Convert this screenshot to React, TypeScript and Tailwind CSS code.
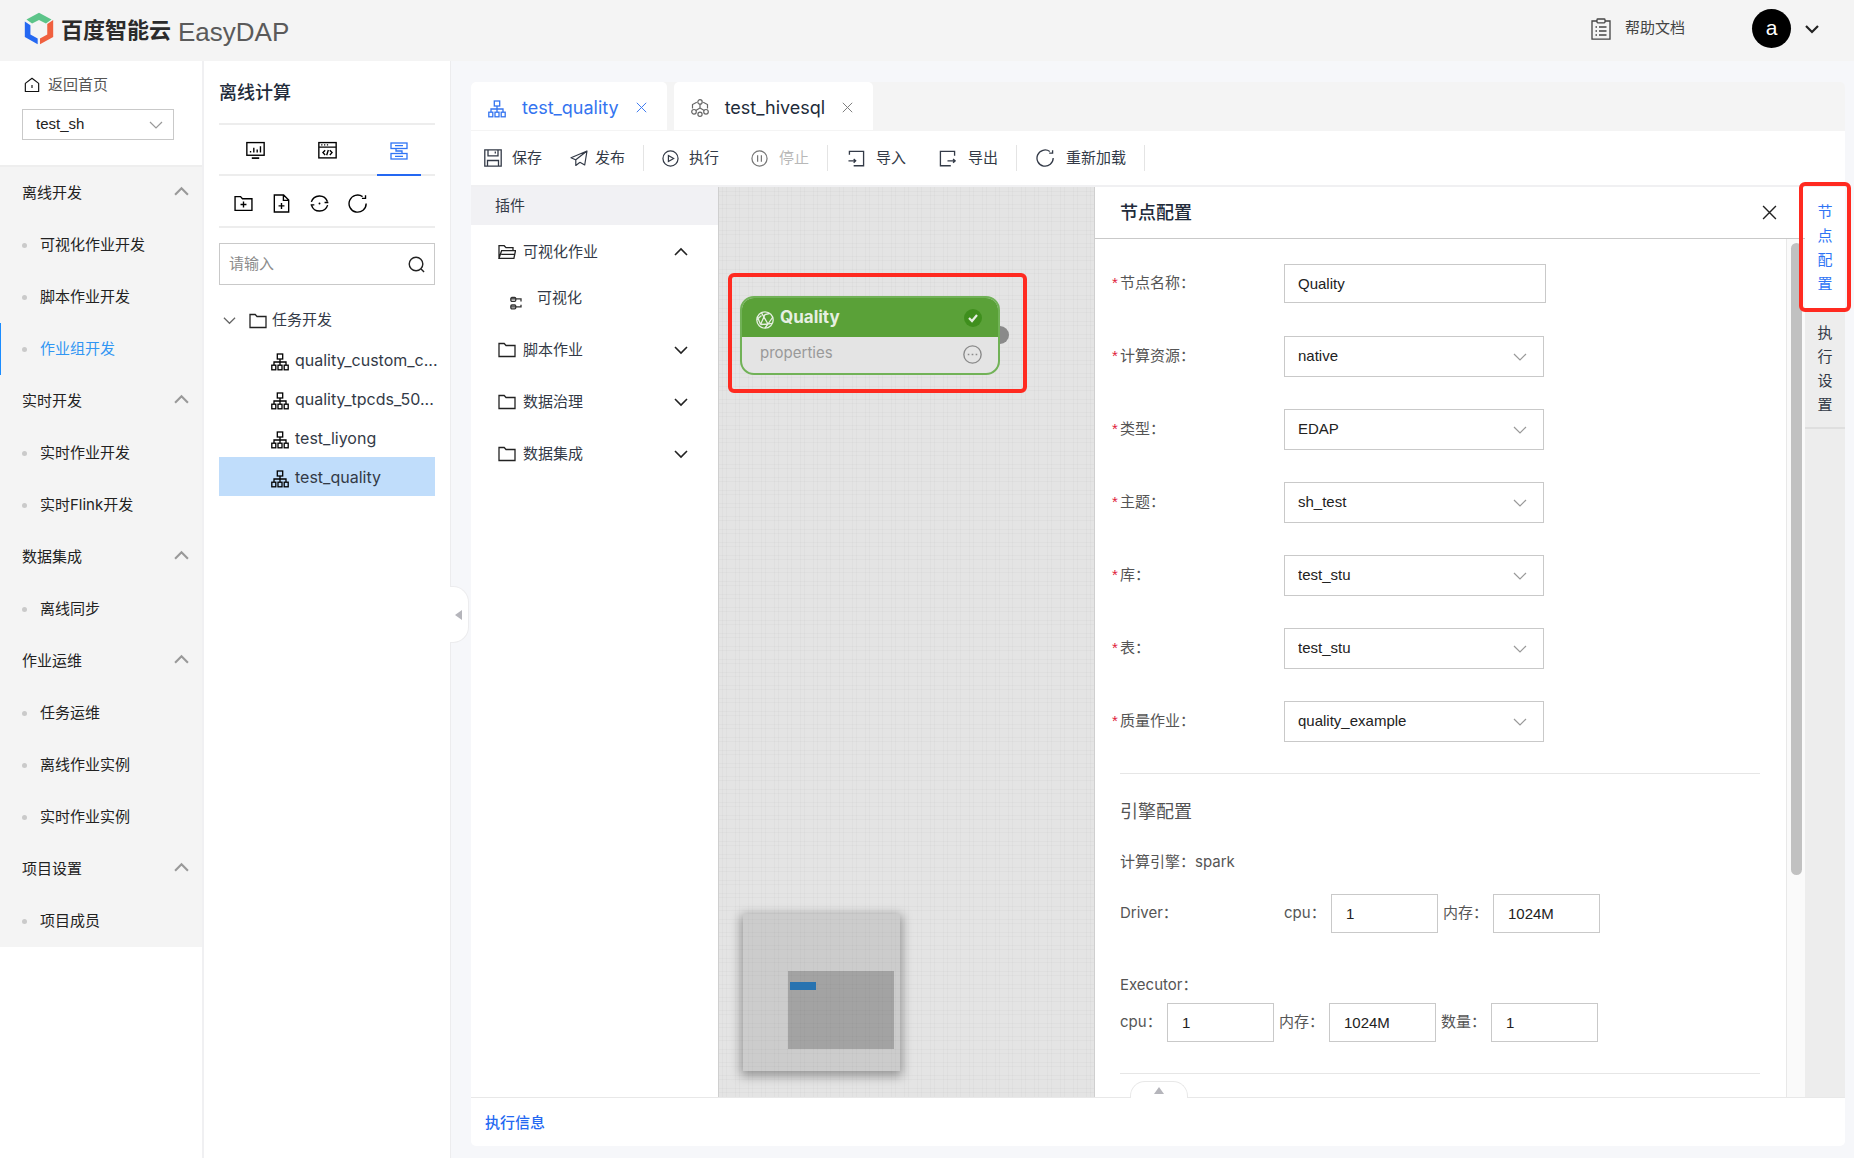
import React from "react";

type P = { className?: string };

const Svg = ({
  className = "",
  box = "0 0 18 18",
  sw = 1.3,
  children,
}: P & { box?: string; sw?: number; children: React.ReactNode }) => (
  <svg
    viewBox={box}
    className={`shrink-0 ${className}`}
    fill="none"
    stroke="currentColor"
    strokeWidth={sw}
    aria-hidden="true"
  >
    {children}
  </svg>
);

const Chevron = ({ className = "", up = false, sw = 1.5 }: P & { up?: boolean; sw?: number }) => (
  <Svg className={className} box="0 0 14 14" sw={sw}>
    <path d={up ? "M1 10 L7 4 L13 10" : "M1 4 L7 10 L13 4"} />
  </Svg>
);

const TreeIcon = ({ className = "size-[18px]" }: P) => (
  <Svg className={className} sw={1.3}>
    <rect x="6.3" y="1" width="5.4" height="5" />
    <path d="M9 6v6M3 12V9h12v3" />
    <rect x="0.8" y="12.2" width="4" height="4.6" />
    <rect x="7" y="12.2" width="4" height="4.6" />
    <rect x="13.2" y="12.2" width="4" height="4.6" />
  </Svg>
);

const FolderIcon = ({ className = "size-[18px]" }: P) => (
  <Svg className={className}>
    <path d="M1 2.5h5.2l1.8 2h9v11H1z" />
  </Svg>
);

const FolderOpenIcon = ({ className = "size-[18px]" }: P) => (
  <Svg className={className}>
    <path d="M1 15.3V2.7h5.2l1.8 2h7v3M1 15.3 3.6 7.7h13.9l-1.6 7.6zM3.2 11.3h13" />
  </Svg>
);

const HomeIcon = ({ className = "" }: P) => (
  <Svg className={className}>
    <path d="M1.5 7.2 9 1.5l7.5 5.7v9.100H1.5z" strokeLinejoin="round" />
    <path d="M9 9v3.5" />
  </Svg>
);

const MonitorIcon = ({ className = "" }: P) => (
  <Svg className={className}>
    <rect x="0.8" y="1.5" width="16.4" height="12" />
    <path d="M5.5 16.200h7" strokeWidth="1.6" />
    <path d="M4.3 9.5V11M7.4 6.500V11M10.600 8v3M13.700 5v6" />
  </Svg>
);

const CodeWindowIcon = ({ className = "" }: P) => (
  <Svg className={className}>
    <rect x="0.8" y="1.500" width="16.400" height="14.500" />
    <path d="M1 5.800h16M3 3.700h1.200M5.700 3.700h1.200M8.400 3.700h1.200M6.800 8.800 4.700 11l2.100 2.200M11.200 8.800l2.100 2.200-2.100 2.200M9.800 8.500l-1.600 5" />
  </Svg>
);

const FlowIcon = ({ className = "" }: P) => (
  <Svg className={className}>
    <rect x="1" y="1" width="16" height="5.500" />
    <rect x="1" y="11.500" width="16" height="5.500" />
    <path d="M5 3.700h8M5 14.300h8M6 6.500V9h6v2.500" />
  </Svg>
);

const FolderPlusIcon = ({ className = "" }: P) => (
  <Svg className={className}>
    <path d="M1 2.500h5.200l1.800 2h9v11H1zM9 7.200v5.600M6.200 10h5.600" />
  </Svg>
);

const FilePlusIcon = ({ className = "" }: P) => (
  <Svg className={className}>
    <path d="M2.200 1h8.800l4.800 4.800V17H2.200zM10.800 1v5h5M9 8.500v5.600M6.200 11.300h5.600" />
  </Svg>
);

const SyncIcon = ({ className = "" }: P) => (
  <Svg className={className}>
    <path d="M1.300 7.500A8 8 0 0 1 16.500 7.200M16.700 10.500A8 8 0 0 1 1.500 10.800M17.400 8.100h-3.600M0.600 10.300h3.500" />
    <circle cx="9" cy="9" r="0.900" fill="currentColor" stroke="none" />
  </Svg>
);

const ReloadIcon = ({ className = "" }: P) => (
  <Svg className={className}>
    <path d="M17.200 9A8.100 8.100 0 1 1 13.800 2.500" />
    <path d="M13.200 4.200h3.400V1.200" />
  </Svg>
);

const SearchIcon = ({ className = "" }: P) => (
  <Svg className={className} sw={1.5}>
    <circle cx="8.500" cy="8.500" r="7.200" />
    <path d="m13.800 13.800 3.200 3.200" />
  </Svg>
);

const SaveIcon = ({ className = "" }: P) => (
  <Svg className={className}>
    <path d="M0.800 0.800h16.400v16.400H0.800zM4 1v5.800h10V1M11.300 2.500v2M3.500 17v-5.500h11V17" />
  </Svg>
);

const SendIcon = ({ className = "" }: P) => (
  <Svg className={className} sw={1.2}>
    <path
      d="M5.500 10.800 1 8.800 17 2l-2.300 14-4.800-2.700M5.800 10.800 17 2M5.800 10.800v5.700l4.200-3.200"
      strokeLinejoin="round"
    />
  </Svg>
);

const PlayIcon = ({ className = "" }: P) => (
  <Svg className={className}>
    <circle cx="9" cy="9" r="8" />
    <path d="M6.800 5.800v6.400L12.300 9z" />
  </Svg>
);

const PauseIcon = ({ className = "" }: P) => (
  <Svg className={className}>
    <circle cx="9" cy="9" r="8" />
    <path d="M7 5.500v7M11 5.500v7" />
  </Svg>
);

const ImportIcon = ({ className = "" }: P) => (
  <Svg className={className} sw={1.4}>
    <path d="M1.500 5V1.500h15v15.200H6M0.500 11.500H8M6 9.600l2.100 1.900L6 13.400" />
  </Svg>
);

const ExportIcon = ({ className = "" }: P) => (
  <Svg className={className} sw={1.4}>
    <path d="M16.500 6V1.500h-15v15.200H12.500M9 11.500h8M14.900 9.600l2.100 1.900-2.100 1.900" />
  </Svg>
);

const HiveIcon = ({ className = "" }: P) => (
  <Svg className={className} sw={1.2}>
    <circle cx="9" cy="2.900" r="2.200" />
    <circle cx="3" cy="12.800" r="2.300" />
    <circle cx="15" cy="12.800" r="2.300" />
    <circle cx="9" cy="15.300" r="2.100" />
    <path d="M5.800 3.200 1.500 5.500v4M12.200 3.200l4.300 2.300v4M9 5.100V9M9 9l-4.200 2.500M9 9l4.200 2.500" />
  </Svg>
);

const PluginIcon = ({ className = "" }: P) => (
  <Svg className={className} box="0 0 12 14" sw={1.3}>
    <rect x="0.800" y="1.500" width="5" height="3.800" rx="1.200" />
    <rect x="0.800" y="9" width="5" height="3.800" rx="1.200" />
    <path d="M1 2.800h10v2.700M1 10.800h10V8.800" />
  </Svg>
);

const GlobeIcon = ({ className = "" }: P) => (
  <Svg className={className} sw={1.3}>
    <circle cx="9" cy="9" r="8.200" />
    <path d="M5.500 1.800 12 13l4-.6M4.500 13.500 9 3.500l4.500-1M1 8.500l4.500-4M4.500 13.500 12 13l-3 4M12 13l4.500-6.500M4.500 13.500 1.500 6" />
  </Svg>
);

const DocIcon = ({ className = "" }: P) => (
  <Svg className={className} box="0 0 20 22" sw={1.3}>
    <path d="M6 3H1v18.200h18V3h-5" />
    <rect x="6" y="1" width="8" height="3.800" rx="0.800" />
    <path d="M4.500 9H6M8 9h7.500M4.500 13H6M8 13h7.500M4.500 17H6M8 17h7.500" />
  </Svg>
);

const CloseIcon = ({ className = "", sw = 1.2 }: P & { sw?: number }) => (
  <Svg className={className} box="0 0 14 14" sw={sw}>
    <path d="M1 1l12 12M13 1 1 13" />
  </Svg>
);

const Logo = () => (
  <svg viewBox="0 0 90 100" className="h-[33px] w-[30px] shrink-0" aria-hidden="true">
    <path d="M45 2 83 23 66 35 45 24 24 35 7 23z" fill="#5cc489" />
    <path d="M2 29 19 40V68L41 80V98L2 76z" fill="#2468f2" />
    <path d="M88 24V76L48 98V80L70 68V36z" fill="#f0603f" />
  </svg>
);

const menu: { title: string; items: string[] }[] = [
  { title: "离线开发", items: ["可视化作业开发", "脚本作业开发", "作业组开发"] },
  { title: "实时开发", items: ["实时作业开发", "实时Flink开发"] },
  { title: "数据集成", items: ["离线同步"] },
  { title: "作业运维", items: ["任务运维", "离线作业实例", "实时作业实例"] },
  { title: "项目设置", items: ["项目成员"] },
];

const Header = () => (
  <header className="flex h-[61px] items-center bg-[#f4f4f4] pr-[35px] pb-1 pl-6">
    <Logo />
    <span className="mt-1 ml-[7px] text-[22px] font-bold text-[#2b2b2b]">百度智能云</span>
    <span className="mt-2 ml-[7px] font-['Liberation_Sans',sans-serif] text-[26px] text-[#5a5a5a]">EasyDAP</span>
    <a href="#help" className="ml-auto flex items-center gap-[14px] text-[#444]">
      <DocIcon className="h-[22px] w-5" />
      帮助文档
    </a>
    <button type="button" className="ml-[67px] flex items-center gap-[14px] text-[#222]">
      <span className="flex size-[39px] items-center justify-center rounded-full bg-black pb-0.5 font-['Liberation_Sans',sans-serif] text-[21px] text-white">
        a
      </span>
      <Chevron className="size-[14px]" sw={2.2} />
    </button>
  </header>
);

const Sidebar = () => (
  <aside className="w-[204px] shrink-0 border-r-2 border-[#f0f0f2] bg-white">
    <div className="h-[106px] border-b-2 border-[#eeeeee] px-[22px] pt-3">
      <a href="#home" className="flex h-6 items-center gap-2 text-[#555]">
        <HomeIcon className="ml-0.5 size-4 text-[#111]" />
        返回首页
      </a>
      <div className="relative mt-3">
        <select
          aria-label="项目"
          className="h-[31px] w-[152px] appearance-none border border-[#c9c9c9] bg-white px-[13px] font-['Liberation_Sans',sans-serif] text-[#222]"
        >
          <option>test_sh</option>
        </select>
        <Chevron className="pointer-events-none absolute top-[9px] left-[127px] size-[14px] text-[#999]" sw={1.2} />
      </div>
    </div>
    <nav className="bg-[#f4f4f4] text-[#222]">
      {menu.map((g) => (
        <div key={g.title}>
          <button type="button" className="flex h-[52px] w-full items-center justify-between pr-[13px] pl-[22px]">
            {g.title}
            <Chevron className="mb-1 size-[15px] text-[#999]" up sw={2} />
          </button>
          {g.items.map((t) => (
            <a
              key={t}
              href="#menu"
              className={`flex h-[52px] items-center gap-[13px] border-l pl-[21px] ${
                t === "作业组开发" ? "border-[#1a8cff] text-[#3196f3]" : "border-transparent"
              }`}
            >
              <i className="size-[5px] rounded-full bg-[#cacaca]" />
              {t}
            </a>
          ))}
        </div>
      ))}
    </nav>
  </aside>
);

const tree = ["quality_custom_c...", "quality_tpcds_50...", "test_liyong", "test_quality"];

const Explorer = () => (
  <section className="relative w-[247px] shrink-0 border-r border-[#ececee] bg-white px-[15px] text-[#333a47]">
    <h2 className="flex h-16 items-center border-b-2 border-[#ededed] text-[18px] font-medium text-[#222b3a]">离线计算</h2>
    <div className="flex h-[51px] justify-around border-b-2 border-[#ededed] text-black">
      <button type="button" aria-label="可视化" className="flex w-11 items-center justify-center pt-0.5">
        <MonitorIcon className="size-[19px]" />
      </button>
      <button type="button" aria-label="脚本" className="flex w-11 items-center justify-center pt-0.5">
        <CodeWindowIcon className="size-[19px]" />
      </button>
      <button
        type="button"
        aria-label="作业组"
        className="-mb-0.5 flex w-11 items-center justify-center border-b-2 border-[#2468f2] pt-0.5 text-[#2f74f5]"
      >
        <FlowIcon className="size-[18px]" />
      </button>
    </div>
    <div className="flex h-[52px] items-center gap-[19px] border-b-2 border-[#ededed] pt-1 pl-[15px] text-black">
      <button type="button" aria-label="新建文件夹"><FolderPlusIcon className="size-[19px]" /></button>
      <button type="button" aria-label="新建文件"><FilePlusIcon className="size-[19px]" /></button>
      <button type="button" aria-label="同步"><SyncIcon className="size-[19px]" /></button>
      <button type="button" aria-label="刷新"><ReloadIcon className="size-[19px]" /></button>
    </div>
    <div className="mt-[15px] flex h-[42px] items-center border border-[#c9c9c9] px-[9px]">
      <input
        aria-label="搜索"
        placeholder="请输入"
        className="w-full min-w-0 outline-none placeholder:text-[#8c8c8c]"
      />
      <SearchIcon className="size-[17px] text-[#222]" />
    </div>
    <div className="mt-4 flex h-[39px] items-center pl-1">
      <Chevron className="size-[13px] text-[#666]" sw={1.3} />
      <FolderIcon className="mr-[5px] ml-[13px] size-[18px] text-[#222]" />
      任务开发
    </div>
    <ul>
      {tree.map((t) => (
        <li
          key={t}
          className={`flex h-[39px] items-center gap-[6px] pl-[52px] text-base whitespace-nowrap ${
            t === "test_quality" ? "bg-[#c0ddfb]" : ""
          }`}
        >
          <TreeIcon className="mt-1 size-[18px] text-black" />
          {t}
        </li>
      ))}
    </ul>
    <button
      type="button"
      aria-label="收起"
      className="absolute top-[525px] -right-[19px] flex h-[57px] w-[19px] items-center rounded-r-[16px] border border-l-0 border-[#ececee] bg-white pl-[5px]"
    >
      <svg viewBox="0 0 7 10" className="h-[10px] w-[7px]" fill="#b5b5bb" aria-hidden="true">
        <path d="M7 0v10L0 5z" />
      </svg>
    </button>
  </section>
);

const Tab = ({ label, icon, active = false }: { label: string; icon: React.ReactNode; active?: boolean }) => (
  <div
    className={`flex h-12 items-center rounded-t-[5px] bg-white pt-0.5 pr-5 pl-[17px] text-[18px] ${
      active ? "text-[#3474f0]" : "text-[#222b3a]"
    }`}
  >
    {icon}
    <button type="button" className="mr-[17px] ml-4">{label}</button>
    <button type="button" aria-label={`关闭 ${label}`} className={active ? "" : "text-[#777]"}>
      <CloseIcon className="size-[11px]" />
    </button>
  </div>
);

const Tool = ({ icon, label, className = "" }: P & { icon: React.ReactNode; label: string }) => (
  <button type="button" className={`flex items-center ${className}`}>
    {icon}
    {label}
  </button>
);

const Sep = ({ className = "" }: P) => <span className={`h-[26px] w-px bg-[#e4e4e4] ${className}`} />;

const Toolbar = () => (
  <div className="flex h-14 items-center border-b-2 border-[#f0f0f2] pl-[13px] whitespace-nowrap text-[#333a47]">
    <Tool className="gap-[10px]" icon={<SaveIcon className="size-[18px]" />} label="保存" />
    <Tool className="ml-7 gap-[7px]" icon={<SendIcon className="size-[18px]" />} label="发布" />
    <Sep className="ml-[18px]" />
    <Tool className="ml-[18px] gap-[10px]" icon={<PlayIcon className="size-[17px]" />} label="执行" />
    <Tool
      className="ml-8 gap-[11px] text-[#b8b8b8]"
      icon={<PauseIcon className="size-[17px] text-[#777]" />}
      label="停止"
    />
    <Sep className="ml-[18px]" />
    <Tool className="ml-5 gap-[11px]" icon={<ImportIcon className="size-[17px]" />} label="导入" />
    <Tool className="ml-[33px] gap-3" icon={<ExportIcon className="size-[17px]" />} label="导出" />
    <Sep className="ml-[18px]" />
    <Tool className="ml-[19px] gap-3" icon={<ReloadIcon className="size-[18px]" />} label="重新加载" />
    <Sep className="ml-[18px]" />
  </div>
);

const Palette = () => (
  <div className="w-[247px] shrink-0 text-[#333a47]">
    <div className="flex h-[38px] items-center bg-[#f1f1f4] pl-6">插件</div>
    <button type="button" className="flex h-[54px] w-full items-center pr-[30px] pl-[27px]">
      <FolderOpenIcon className="mr-[7px] size-[18px] text-[#222]" />
      可视化作业
      <Chevron className="ml-auto size-[14px] text-[#222]" up sw={1.6} />
    </button>
    <div className="flex h-[45px] items-center pb-1.5 pl-[39px]">
      <PluginIcon className="mt-2 mr-[15px] h-[14px] w-3 text-[#333]" />
      可视化
    </div>
    {["脚本作业", "数据治理", "数据集成"].map((t) => (
      <button key={t} type="button" className="flex h-[52px] w-full items-center pr-[30px] pl-[27px]">
        <FolderIcon className="mr-[7px] size-[18px] text-[#222]" />
        {t}
        <Chevron className="ml-auto size-[14px] text-[#222]" sw={1.6} />
      </button>
    ))}
  </div>
);

const Canvas = () => (
  <div className="relative min-w-0 flex-1 overflow-hidden border-l border-[#cfcfcf] bg-[#e4e4e4] bg-[linear-gradient(to_right,transparent_3px,rgba(0,0,0,0.025)_3px,rgba(0,0,0,0.025)_4px,transparent_4px,transparent_7px,rgba(0,0,0,0.025)_7px,rgba(0,0,0,0.025)_8px,transparent_8px),linear-gradient(to_bottom,transparent_4px,rgba(0,0,0,0.025)_4px,rgba(0,0,0,0.025)_5px,transparent_5px,transparent_8px,rgba(0,0,0,0.025)_8px,rgba(0,0,0,0.025)_9px,transparent_9px)] bg-[size:13px_13px]">
    <div className="absolute top-[86px] left-[9px] h-[120px] w-[299px] rounded-[6px] border-4 border-[#ff2a20] pt-[19px] pl-2">
      <div className="relative h-[79px] w-[260px]">
        <i className="absolute top-[30px] -right-[9px] size-[18px] rounded-full bg-[#8a8a8a]" />
        <div className="relative h-full overflow-hidden rounded-[14px] border-2 border-[#71b257] bg-[#e4e4e4]">
          <div className="-mx-0.5 -mt-0.5 flex h-[41px] items-center bg-[#5aa138] pt-0.5 pr-[18px] pl-4 text-[17px] font-bold text-[#e6efe2]">
            <GlobeIcon className="mt-1 mr-[6px] size-[18px]" />
            Quality
            <span className="ml-auto flex size-[18px] items-center justify-center rounded-full bg-[#3f8f1d]">
              <Svg className="size-[10px]" box="0 0 10 10" sw={2.2}>
                <path d="M1 5l3 3 5-6" />
              </Svg>
            </span>
          </div>
          <div className="flex h-8 items-center pr-4 pl-[18px] text-[#999]">
            properties
            <Svg className="mt-0.5 ml-auto size-[19px] text-[#8a8a8a]" sw={1.3}>
              <circle cx="9" cy="9" r="8.200" />
              <path d="M4.500 9h1.500M8.200 9h1.600M12 9h1.500" />
            </Svg>
          </div>
        </div>
      </div>
    </div>
    <div className="absolute bottom-[26px] left-[24px] h-[157px] w-[157px] bg-black/10 shadow-[0_3px_10px_2px_rgba(0,0,0,0.35)]">
      <div className="absolute top-[57px] left-[45px] h-[78px] w-[106px] bg-black/20">
        <div className="mt-[11px] ml-0.5 h-2 w-[26px] bg-[#2873b0]" />
      </div>
    </div>
  </div>
);

const FormSelect = ({ id, value }: { id: string; value: string }) => (
  <div className="relative">
    <select
      id={id}
      className="h-[41px] w-[260px] appearance-none border border-[#c9c9c9] bg-white px-[13px] font-['Liberation_Sans',sans-serif] text-[#222]"
    >
      <option>{value}</option>
    </select>
    <Chevron className="pointer-events-none absolute top-[14px] right-[17px] size-[14px] text-[#999]" sw={1.2} />
  </div>
);

const fields = [
  ["计算资源", "native"],
  ["类型", "EDAP"],
  ["主题", "sh_test"],
  ["库", "test_stu"],
  ["表", "test_stu"],
  ["质量作业", "quality_example"],
];

const FieldLabel = ({ id, text }: { id: string; text: string }) => (
  <label htmlFor={id} className="flex w-[172px] items-center">
    <span className="w-2 font-['Liberation_Sans',sans-serif] text-[#e0203a]">*</span>
    {text}：
  </label>
);

const SmallField = ({ id, label, value, short = false }: { id: string; label: string; value: string; short?: boolean }) => (
  <div className="mr-[5px] flex items-center">
    <label htmlFor={id} className={short ? "w-[47px]" : "w-[50px]"}>
      {label}：
    </label>
    <input
      id={id}
      defaultValue={value}
      className="h-[39px] w-[107px] border border-[#c9c9c9] px-[14px] font-['Liberation_Sans',sans-serif] text-[#222]"
    />
  </div>
);

const Config = () => (
  <div className="flex w-[711px] shrink-0 flex-col border-l border-[#cfcfcf] text-[#555]">
    <div className="flex h-[52px] items-center justify-between border-b border-[#c9c9c9] pr-7 pl-[25px]">
      <h3 className="text-[18px] font-medium text-[#222b3a]">节点配置</h3>
      <button type="button" aria-label="关闭" className="text-[#222]">
        <CloseIcon className="size-[15px]" sw={1.3} />
      </button>
    </div>
    <div className="flex flex-1">
      <form className="flex-1 pr-[26px] pl-[25px]">
        <div className="-ml-2 flex flex-col gap-8 pt-6">
          <div className="flex h-[41px] items-center">
            <FieldLabel id="name" text="节点名称" />
            <input
              id="name"
              defaultValue="Quality"
              className="h-[39px] w-[262px] border border-[#c9c9c9] px-[13px] font-['Liberation_Sans',sans-serif] text-[#222]"
            />
          </div>
          {fields.map(([label, value]) => (
            <div key={label} className="flex h-[41px] items-center">
              <FieldLabel id={label} text={label} />
              <FormSelect id={label} value={value} />
            </div>
          ))}
        </div>
        <hr className="mt-[31px] border-[#e6e6e6]" />
        <h4 className="mt-6 text-[18px] leading-7">引擎配置</h4>
        <p className="mt-6 leading-6">计算引擎：spark</p>
        <div className="mt-5 flex items-center">
          <span className="w-[164px]">Driver：</span>
          <SmallField id="dcpu" label="cpu" value="1" short />
          <SmallField id="dmem" label="内存" value="1024M" />
        </div>
        <p className="mt-10 leading-6">Executor：</p>
        <div className="mt-[6px] flex items-center">
          <SmallField id="ecpu" label="cpu" value="1" short />
          <SmallField id="emem" label="内存" value="1024M" />
          <SmallField id="ecount" label="数量" value="1" />
        </div>
        <hr className="mt-[31px] border-[#e6e6e6]" />
      </form>
      <div className="w-[19px] border-l border-[#e8e8e8] bg-[#fafafa] pt-1 pl-1">
        <div className="h-[632px] w-[11px] rounded-full bg-[#c1c1c1]" />
      </div>
    </div>
  </div>
);

const RightTabs = () => (
  <div className="relative w-10 shrink-0 bg-[#ededed] text-[#333a47]">
    <button type="button" className="flex h-[123px] w-full flex-col items-center bg-white pt-[13px] leading-[24px] text-[#2f74f5]">
      {[..."节点配置"].map((c) => (
        <span key={c}>{c}</span>
      ))}
    </button>
    <button type="button" className="flex h-[119px] w-full flex-col items-center border-b-2 border-[#dfdfdf] pt-[11px] leading-[24px]">
      {[..."执行设置"].map((c) => (
        <span key={c}>{c}</span>
      ))}
    </button>
    <i className="pointer-events-none absolute -top-[5px] -left-[6px] h-[130px] w-[52px] rounded-[6px] border-4 border-[#ff2a20]" />
  </div>
);

export default function App() {
  return (
    <div className="flex min-h-screen flex-col bg-[#f6f7fa] font-[Inter,'Noto_Sans_CJK_SC',sans-serif] text-[15px]">
      <Header />
      <div className="flex flex-1">
        <Sidebar />
        <Explorer />
        <main className="mt-[21px] mr-[9px] mb-3 ml-5 flex min-w-0 flex-1 flex-col">
          <div className="flex gap-[7px] rounded-t-[5px] bg-[#f4f4f4] pb-px">
            <Tab active label="test_quality" icon={<TreeIcon className="mt-1 size-[18px]" />} />
            <Tab label="test_hivesql" icon={<HiveIcon className="mt-0.5 size-[18px] text-[#666]" />} />
          </div>
          <div className="flex flex-1 flex-col rounded-b-[5px] bg-white">
            <Toolbar />
            <div className="flex flex-1">
              <Palette />
              <Canvas />
              <Config />
              <RightTabs />
            </div>
            <footer className="relative flex h-[49px] items-center border-t border-[#e8e8e8] pt-0.5 pl-[14px]">
              <button type="button" className="font-medium text-[#2468f2]">执行信息</button>
              <button
                type="button"
                aria-label="展开"
                className="absolute -top-[17px] left-[659px] flex h-[17px] w-[58px] items-center justify-center rounded-t-[15px] border border-b-0 border-[#e8e8e8] bg-white"
              >
                <svg viewBox="0 0 10 7" className="h-[7px] w-[10px]" fill="#b5b5bb" aria-hidden="true">
                  <path d="M0 7h10L5 0z" />
                </svg>
              </button>
            </footer>
          </div>
        </main>
      </div>
    </div>
  );
}
